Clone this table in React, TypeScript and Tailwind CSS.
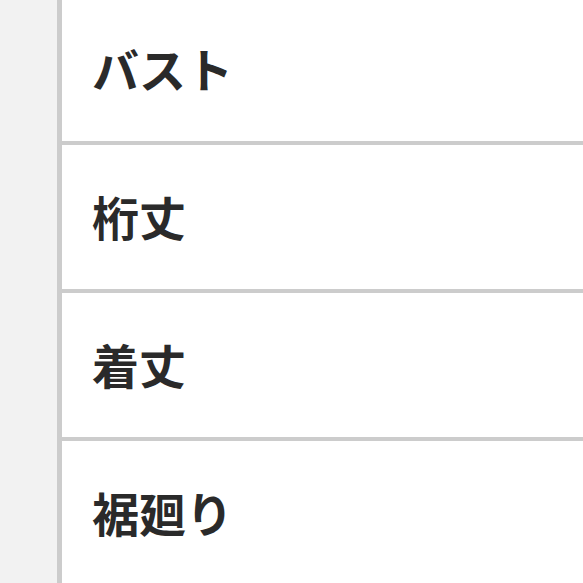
const rows = ["バスト", "桁丈", "着丈", "裾廻り"];

export default function App() {
  return (
    <div className="flex h-[583px] w-[583px] overflow-hidden bg-white">
      <div className="w-[57px] shrink-0 bg-[#f2f2f2]" />
      <div className="flex-1 border-l-[5px] border-[#cccccc]">
        <div className="-mt-[3px]">
          {rows.map((label) => (
            <div
              key={label}
              className="flex h-[148px] items-center border-b-4 border-[#cccccc] pb-[4px] pl-[30px]"
            >
              <span
                className="text-[47px] font-bold leading-none text-[#2a2a2a]"
                style={{ fontFamily: '"Noto Sans CJK JP", "Noto Sans", sans-serif' }}
              >
                {label}
              </span>
            </div>
          ))}
        </div>
      </div>
    </div>
  );
}
